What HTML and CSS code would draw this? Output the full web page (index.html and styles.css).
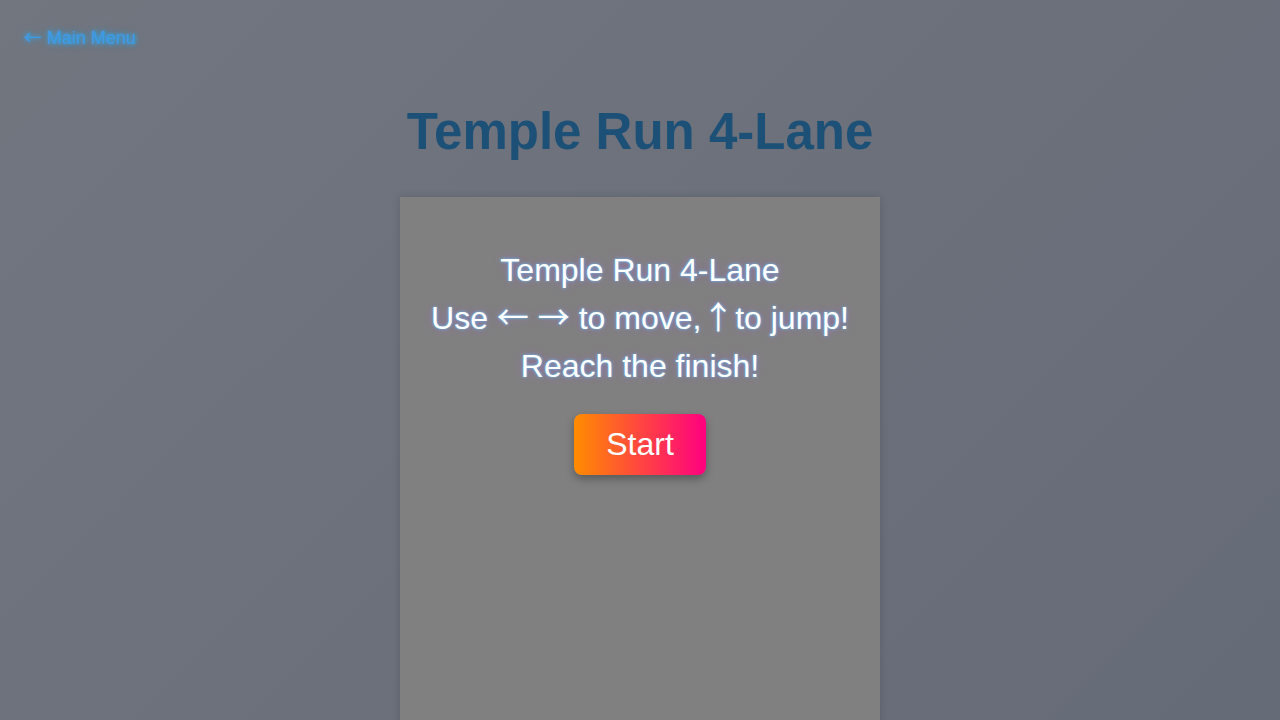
FILE: index.html
```html
<!DOCTYPE html>
<html>
<head>
<meta charset="utf-8">
<link rel="stylesheet" href="styles.css">
</head>
<body>
<a class="back" href="#"><span class="arrow">←</span> Main Menu</a>
<h1 class="title">Temple Run 4-Lane</h1>
<div class="game">
  <div class="intro">
    <div class="line">Temple Run 4-Lane</div>
    <div class="line">Use <span class="arrow">←</span> <span class="arrow">→</span> to move, <span class="arrow arrow-up">↑</span> to jump!</div>
    <div class="line">Reach the finish!</div>
    <button class="start">Start</button>
  </div>
</div>
</body>
</html>
```
FILE: styles.css
```css
html, body {
  margin: 0;
  padding: 0;
  height: 100%;
  overflow: hidden;
}
body {
  background: linear-gradient(135deg, #72767f 0%, #666b78 100%);
  font-family: "Liberation Sans", Arial, sans-serif;
  display: flex;
  flex-direction: column;
  align-items: center;
  position: relative;
}
.back {
  position: absolute;
  left: 24px;
  top: 27px;
  font-size: 18px;
  line-height: 21px;
  color: #3d9be6;
  text-decoration: none;
  text-shadow: 0 0 4px #2fb0ff, 0 0 9px rgba(0, 170, 255, 0.55);
}
.arrow {
  font-family: "Noto Sans CJK JP", "DejaVu Sans", sans-serif;
  line-height: 1;
}
.arrow-up {
  display: inline-block;
  width: 16px;
  overflow: visible;
  white-space: nowrap;
  text-indent: -8px;
}
.title {
  margin: 102px 0 0 0;
  font-size: 51px;
  line-height: 60px;
  font-weight: bold;
  color: #1d5077;
}
.game {
  margin-top: 35px;
  width: 480px;
  height: 720px;
  background: #808080;
  box-shadow: 0 0 8px rgba(0, 0, 0, 0.15);
  flex-shrink: 0;
}
.intro {
  padding-top: 49px;
  display: flex;
  flex-direction: column;
  align-items: center;
}
.line {
  font-size: 32px;
  line-height: 48px;
  height: 48px;
  color: #ffffff;
  text-shadow: 0 0 3px #5ac8ff, 0 0 8px rgba(200, 80, 255, 0.45);
}
.start {
  margin-top: 24px;
  font-family: "Liberation Sans", Arial, sans-serif;
  font-size: 32px;
  padding: 12px 32px;
  color: #ffffff;
  border: none;
  border-radius: 8px;
  background: linear-gradient(90deg, #ff8c00, #ff0080);
  box-shadow: 0 4px 8px rgba(0, 0, 0, 0.3);
  cursor: pointer;
}
```
